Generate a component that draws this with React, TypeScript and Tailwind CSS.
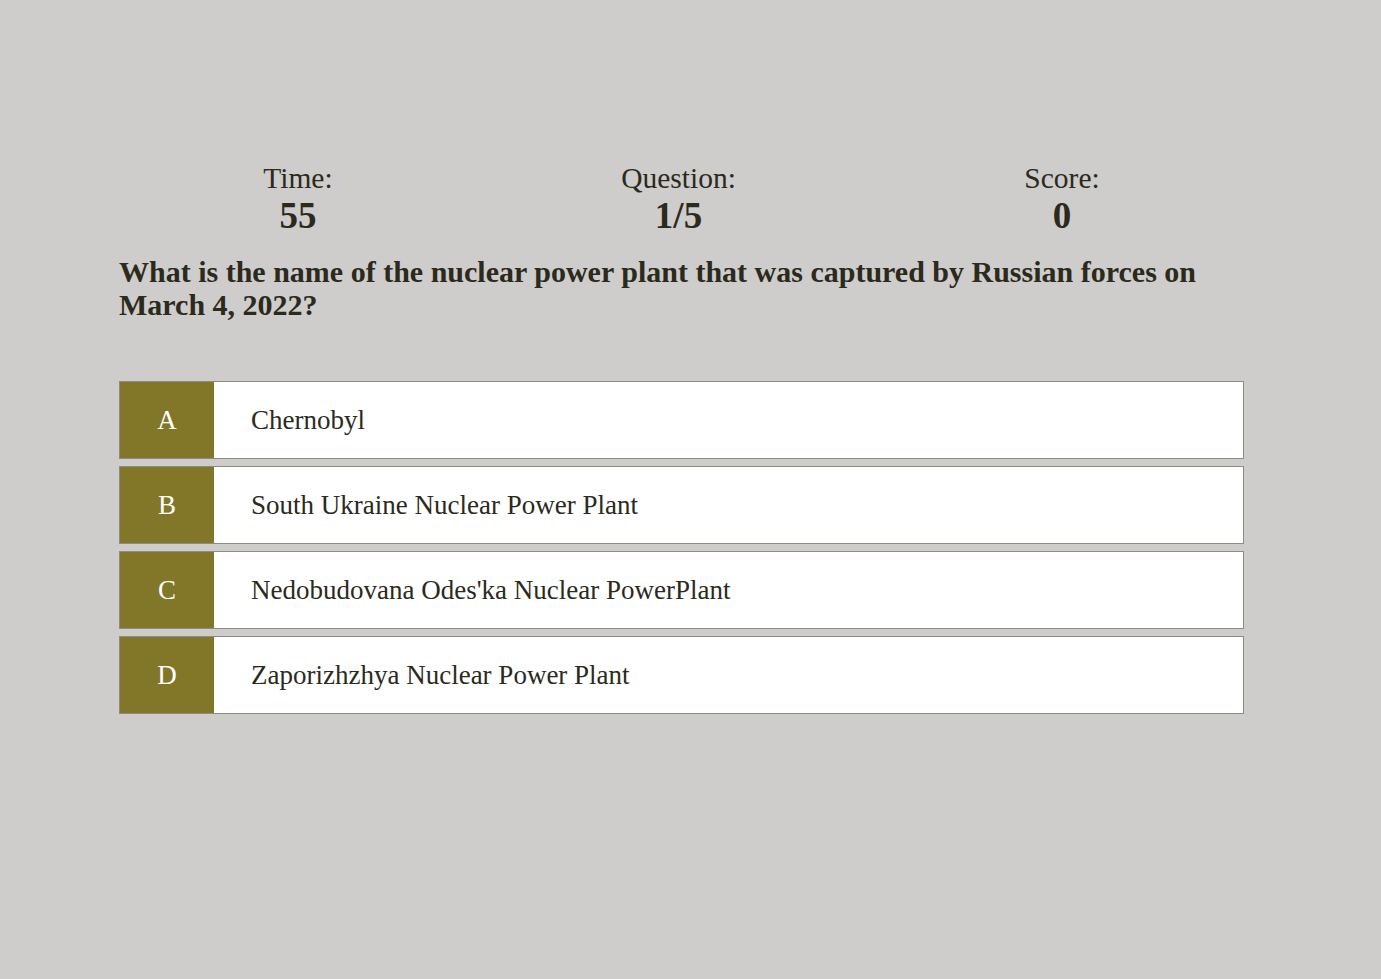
import React from 'react';

const choices = [
  { key: 'A', text: 'Chernobyl' },
  { key: 'B', text: 'South Ukraine Nuclear Power Plant' },
  { key: 'C', text: "Nedobudovana Odes'ka Nuclear PowerPlant" },
  { key: 'D', text: 'Zaporizhzhya Nuclear Power Plant' },
];

const App: React.FC = () => {
  return (
    <div
      className="min-h-screen bg-[#cecdcb] text-[#2b2a1c]"
      style={{ fontFamily: '"Liberation Serif", "Times New Roman", serif' }}
    >
      <div className="w-[1125px] ml-[119px] pt-[160px]">
        {/* stats */}
        <div className="flex justify-around text-center">
          <div>
            <p className="text-[29.5px] leading-[36px]">Time:</p>
            <p className="text-[37px] leading-[40px] font-bold">55</p>
          </div>
          <div>
            <p className="text-[29.5px] leading-[36px]">Question:</p>
            <p className="text-[37px] leading-[40px] font-bold">1/5</p>
          </div>
          <div>
            <p className="text-[29.5px] leading-[36px]">Score:</p>
            <p className="text-[37px] leading-[40px] font-bold">0</p>
          </div>
        </div>

        <h2 className="mt-[19px] text-[30px] leading-[33px] font-bold">
          What is the name of the nuclear power plant that was captured by Russian forces on March 4, 2022?
        </h2>

        <div className="mt-[60px] flex flex-col gap-[7px]">
          {choices.map((c) => (
            <div key={c.key} className="flex h-[78px] border border-[#8e8c80] bg-white">
              <div className="w-[94px] bg-[#827729] text-white text-[27px] flex items-center justify-center">
                {c.key}
              </div>
              <div className="flex items-center pl-[37px] text-[27px]">{c.text}</div>
            </div>
          ))}
        </div>
      </div>
    </div>
  );
};

export default App;
